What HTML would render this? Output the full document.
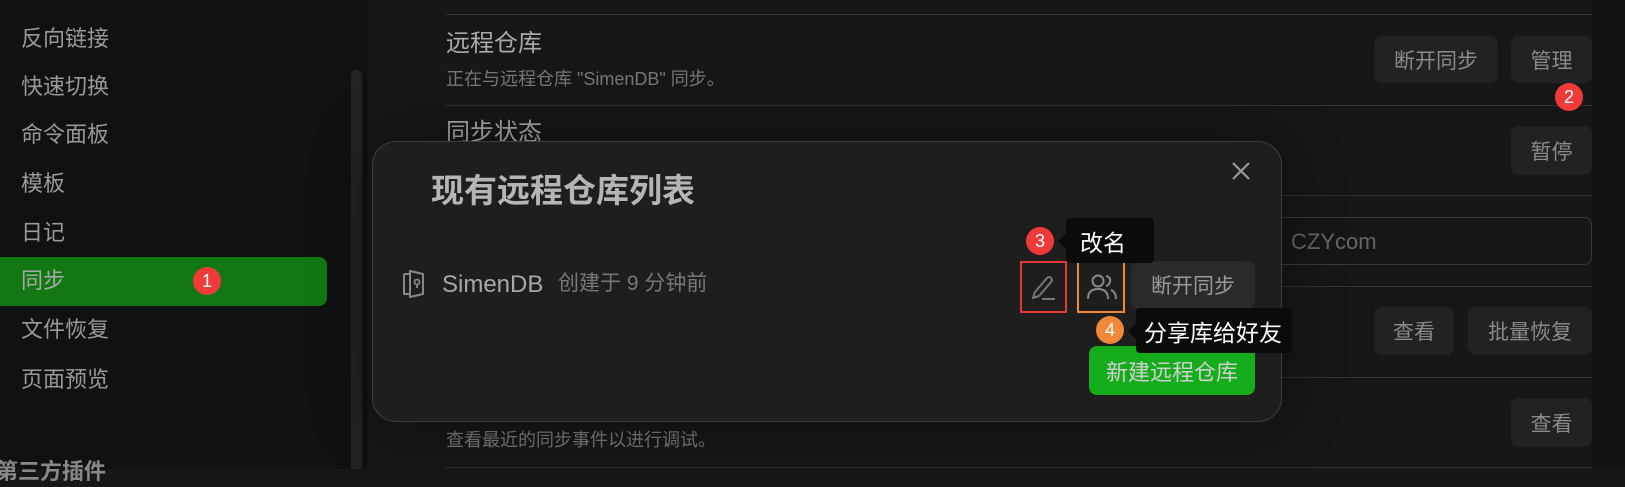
<!DOCTYPE html>
<html><head><meta charset="utf-8"><style>
*{margin:0;padding:0;box-sizing:border-box}
body{width:1625px;height:469px;overflow:hidden;background:#171717;font-family:"Liberation Sans","Noto Sans CJK SC",sans-serif;position:relative}
.a{position:absolute;white-space:nowrap}
.side{left:0;top:0;width:367px;height:469px;background:#111;border-right:1px solid #0a0a0a}
.si{left:21px;font-size:22px;color:#999;line-height:30px;transform:translateY(-15px)}
.line{left:446px;width:1146px;height:1px;background:#333}
.btn{background:#222;border-radius:8px;color:#8a8a8a;font-size:21px;display:flex;align-items:center;justify-content:center}
.badge{border-radius:50%;color:#fff;font-size:18px;display:flex;align-items:center;justify-content:center;width:28px;height:28px}
.tip{background:#0b0b0b;color:#fff;font-size:23px;border-radius:4px;display:flex;align-items:center;padding-left:14px}
.tip:before{content:"";position:absolute;left:-8px;top:50%;margin-top:-8px;border:8px solid transparent;border-left:0;border-right-color:#0b0b0b}
</style></head><body>
<div class="a" style="left:1592px;top:0;width:33px;height:469px;background:#131313"></div>
<div class="a side"></div>
<div class="a" style="left:0;top:257px;width:327px;height:49px;background:#137713;border-radius:0 8px 8px 0"></div>
<div class="a si" style="top:39px">反向链接</div>
<div class="a si" style="top:87px">快速切换</div>
<div class="a si" style="top:135px">命令面板</div>
<div class="a si" style="top:184px">模板</div>
<div class="a si" style="top:233px">日记</div>
<div class="a si" style="top:281px;color:#aaa">同步</div>
<div class="a si" style="top:330px">文件恢复</div>
<div class="a si" style="top:380px">页面预览</div>
<div class="a si" style="top:472px;left:-4px;font-weight:bold;color:#888">第三方插件</div>
<div class="a badge" style="left:193px;top:267px;background:#f03a3a">1</div>
<div class="a" style="left:351px;top:70px;width:11px;height:399px;background:#232323;border-radius:6px 6px 0 0"></div>

<div class="a line" style="top:14px"></div>
<div class="a line" style="top:105px"></div>
<div class="a line" style="top:195px"></div>
<div class="a line" style="top:286px"></div>
<div class="a line" style="top:377px"></div>
<div class="a line" style="top:467px"></div>
<div class="a" style="left:446px;top:29px;font-size:24px;color:#aaa;line-height:30px">远程仓库</div>
<div class="a" style="left:446px;top:67px;font-size:18px;color:#777;line-height:24px">正在与远程仓库 "SimenDB" 同步。</div>
<div class="a" style="left:446px;top:118px;font-size:24px;color:#aaa;line-height:30px">同步状态</div>
<div class="a" style="left:446px;top:428px;font-size:18px;color:#777;line-height:24px">查看最近的同步事件以进行调试。</div>
<div class="a btn" style="left:1374px;top:36px;width:124px;height:47px">断开同步</div>
<div class="a btn" style="left:1511px;top:36px;width:81px;height:47px">管理</div>
<div class="a badge" style="left:1555px;top:83px;background:#f03a3a">2</div>
<div class="a btn" style="left:1511px;top:126px;width:81px;height:49px">暂停</div>
<div class="a" style="left:1260px;top:217px;width:332px;height:48px;border:1px solid #3a3a3a;border-radius:8px;background:#161616"></div>
<div class="a" style="left:1291px;top:228px;font-size:22px;color:#666;line-height:28px">CZYcom</div>
<div class="a btn" style="left:1374px;top:307px;width:80px;height:48px">查看</div>
<div class="a btn" style="left:1468px;top:307px;width:124px;height:48px">批量恢复</div>
<div class="a btn" style="left:1511px;top:398px;width:81px;height:49px">查看</div>

<div class="a" style="left:372px;top:141px;width:910px;height:281px;background:#1e1e1e;border:1px solid #3e3e3e;border-radius:24px;box-shadow:0 0 60px rgba(0,0,0,.4)"></div>
<div class="a" style="left:431px;top:170px;font-size:33px;font-weight:bold;color:#b5b5b5;line-height:42px">现有远程仓库列表</div>
<svg class="a" style="left:1230px;top:161px" width="22" height="20" viewBox="0 0 22 20"><path d="M3 2L19 18M19 2L3 18" stroke="#999" stroke-width="2.2"/></svg>
<svg class="a" style="left:402px;top:269px" width="28" height="30" viewBox="0 0 28 30"><path d="M2 5H8M2 5V25H8M8 2L21 5V25L8 28Z" fill="none" stroke="#888" stroke-width="2" stroke-linejoin="round"/><circle cx="15" cy="13" r="2.5" fill="none" stroke="#888" stroke-width="1.8"/><path d="M15 15.5V19" stroke="#888" stroke-width="1.8"/></svg>
<div class="a" style="left:442px;top:270px;font-size:24px;color:#a8a8a8;line-height:30px">SimenDB</div>
<div class="a" style="left:558px;top:271px;font-size:21px;color:#777;line-height:26px">创建于 9 分钟前</div>

<div class="a" style="left:1020px;top:261px;width:47px;height:52px;border:2px solid #e53935"></div>
<svg class="a" style="left:1028px;top:274px" width="32" height="30" viewBox="0 0 32 30"><path d="M5 24L7 18L19 4Q21 2 23 4Q25 6 23 8L11 22Z" fill="none" stroke="#777" stroke-width="2" stroke-linejoin="round"/><path d="M14 25H27" stroke="#777" stroke-width="2"/></svg>
<div class="a" style="left:1077px;top:259px;width:48px;height:54px;border:2px solid #f08a30"></div>
<svg class="a" style="left:1085px;top:272px" width="34" height="32" viewBox="0 0 34 32"><circle cx="13" cy="9" r="5.5" fill="none" stroke="#888" stroke-width="2"/><path d="M3 27Q3 17 13 17Q23 17 23 27" fill="none" stroke="#888" stroke-width="2"/><path d="M21 4Q26 5 25 10Q24 13 21 14M26 18Q31 20 31 27" fill="none" stroke="#888" stroke-width="2"/></svg>
<div class="a btn" style="left:1131px;top:261px;width:124px;height:48px;background:#2a2a2a;color:#999">断开同步</div>
<div class="a tip" style="left:1066px;top:218px;width:88px;height:45px">改名</div>
<div class="a badge" style="left:1026px;top:227px;background:#f03a3a">3</div>
<div class="a" style="left:1089px;top:346px;width:166px;height:49px;background:#16ad1c;border-radius:8px;color:#d0d0d0;font-size:22px;display:flex;align-items:center;justify-content:center">新建远程仓库</div>
<div class="a tip" style="left:1136px;top:308px;width:156px;height:45px;padding-left:8px">分享库给好友</div>
<div class="a badge" style="left:1096px;top:316px;background:#f0883a">4</div>
</body></html>
